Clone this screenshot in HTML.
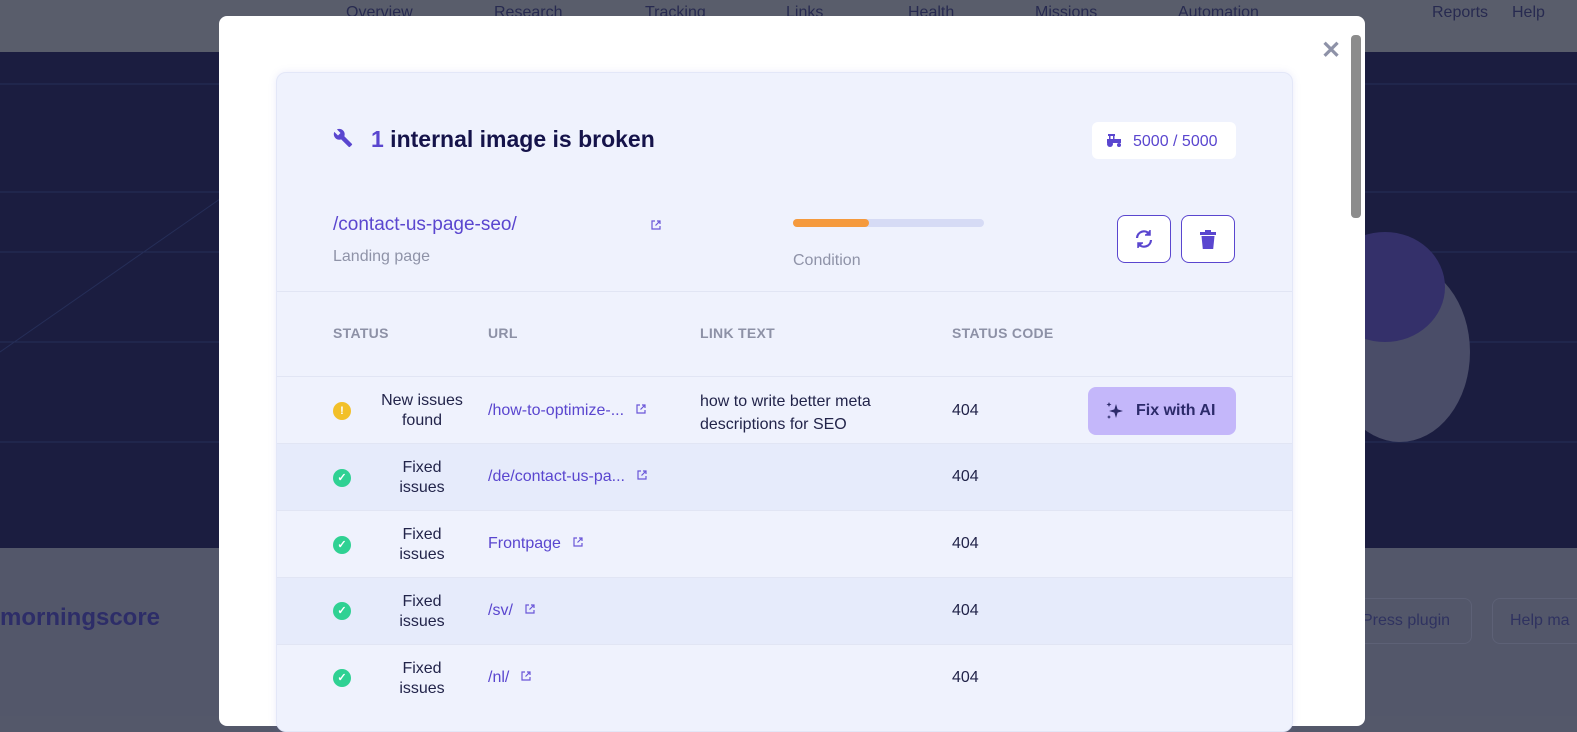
<!DOCTYPE html>
<html><head><meta charset="utf-8"><style>
*{margin:0;padding:0;box-sizing:border-box}
body{width:1577px;height:716px;overflow:hidden;position:relative;font-family:"Liberation Sans",sans-serif;background:#54586a}
.nav{position:absolute;left:0;top:0;width:1577px;height:52px;background:#595d6b}
.nav span{position:absolute;top:4px;font-size:16px;color:#272a50}
.hero{position:absolute;left:0;top:52px;width:1577px;height:496px;background:#1b1d40}
.foot{position:absolute;left:0;top:548px;width:1577px;height:168px;background:#53576a}
.modal{position:absolute;left:219px;top:16px;width:1146px;height:710px;background:#fff;border-radius:8px}
.close{position:absolute;left:1321px;top:36px;font-size:24px;color:#8e92a8;font-weight:bold}
.sb{position:absolute;left:1351px;top:35px;width:10px;height:183px;background:#8c8c8c;border-radius:4px}
.card{position:absolute;left:276px;top:72px;width:1017px;height:660px;background:#eff2fd;border:1px solid #e3e7f8;border-radius:10px;box-shadow:0 0 8px rgba(120,130,220,.15);overflow:hidden}
.t{position:absolute;white-space:nowrap}
.row{position:absolute;left:0;width:1017px;height:67px;border-top:1px solid #e1e5f4}
.st{position:absolute;left:90px;width:110px;text-align:center;font-size:16px;color:#22244a;line-height:20px}
.url{position:absolute;left:211px;font-size:16px;color:#5a46cf}
.ext{display:inline-block;width:10px;height:10px;margin-left:12px;vertical-align:1px}
.ok{position:absolute;left:56px;width:18px;height:18px;border-radius:50%;background:#2fd193;color:#fff;font-size:11px;text-align:center;line-height:18px;font-weight:bold}
.code{position:absolute;left:675px;font-size:16px;color:#22244a}
.hd{position:absolute;top:33px;font-size:14px;font-weight:bold;color:#8d91a6;letter-spacing:.3px}
</style></head><body>
<div class="nav">
<span style="left:346px">Overview</span><span style="left:494px">Research</span><span style="left:645px">Tracking</span><span style="left:786px">Links</span><span style="left:908px">Health</span><span style="left:1035px">Missions</span><span style="left:1178px">Automation</span><span style="left:1432px">Reports</span><span style="left:1512px">Help</span>
</div>
<div class="hero">
<svg width="1577" height="496" style="position:absolute;left:0;top:0"><g stroke="#262e58" fill="none"><line x1="0" y1="32" x2="1577" y2="32"/><line x1="0" y1="140" x2="1577" y2="140"/><line x1="0" y1="200" x2="1577" y2="200"/><line x1="0" y1="290" x2="1577" y2="290"/><line x1="0" y1="390" x2="1577" y2="390"/><line x1="0" y1="300" x2="230" y2="140"/></g>
<ellipse cx="1400" cy="300" rx="70" ry="90" fill="#4a4d68"/><ellipse cx="1385" cy="235" rx="60" ry="55" fill="#34306a"/></svg>
</div>
<div class="foot">
<div class="t" style="left:0;top:56px;font-size:24px;color:#2d2d68;font-weight:bold">morningscore</div>
<div style="position:absolute;left:1340px;top:50px;width:132px;height:46px;border:1px solid #5d6176;border-radius:8px"></div>
<div class="t" style="left:1362px;top:64px;font-size:16px;color:#2f3260">Press plugin</div>
<div style="position:absolute;left:1492px;top:50px;width:100px;height:46px;border:1px solid #5d6176;border-radius:8px"></div>
<div class="t" style="left:1510px;top:64px;font-size:16px;color:#2f3260">Help ma</div>
</div>
<div class="modal"></div>
<div class="close">✕</div>
<div class="sb"></div>
<div class="card">
<svg class="t" style="left:56px;top:55px" width="20" height="20" viewBox="0 0 24 24"><path d="M22.7 19l-9.1-9.1c.9-2.3.4-5-1.5-6.9-2-2-5-2.4-7.4-1.3L9 6 6 9 1.6 4.7C.4 7.1.9 10.1 2.9 12.1c1.9 1.9 4.6 2.4 6.9 1.5l9.1 9.1c.4.4 1 .4 1.4 0l2.3-2.3c.5-.4.5-1.1.1-1.4z" fill="#5a46cf"/></svg>
<div class="t" style="left:94px;top:53px;font-size:23px;font-weight:bold;color:#15134a"><span style="color:#5a46cf">1</span> internal image is broken</div>
<div style="position:absolute;left:815px;top:49px;width:144px;height:37px;background:#fff;border-radius:6px"></div>
<svg class="t" style="left:829px;top:61px" width="16" height="13" viewBox="0 0 16 13" fill="#5a46cf"><rect x="2" y="0" width="7" height="2"/><rect x="3" y="2" width="1.5" height="4"/><rect x="7" y="2" width="1.5" height="4"/><rect x="1" y="5" width="14" height="4"/><circle cx="4" cy="10" r="3"/><circle cx="13" cy="11" r="2"/></svg>
<div class="t" style="left:856px;top:60px;font-size:16px;color:#5a46cf">5000 / 5000</div>
<div class="t" style="left:56px;top:141px;font-size:19px;color:#5a46cf">/contact-us-page-seo/</div>
<svg class="t" style="left:374px;top:147px" width="10" height="10" viewBox="0 0 10 10" fill="none" stroke="#6a56d8" stroke-width="1.2"><path d="M4 1H1v8h8V6M6 1h3v3M9 1L4.5 5.5"/></svg>
<div class="t" style="left:56px;top:175px;font-size:16px;color:#8f93a8">Landing page</div>
<div style="position:absolute;left:516px;top:146px;width:191px;height:8px;background:#d6dbf5;border-radius:4px"><div style="width:76px;height:8px;background:#f59a3d;border-radius:4px"></div></div>
<div class="t" style="left:516px;top:179px;font-size:16px;color:#8f93a8">Condition</div>
<div style="position:absolute;left:840px;top:142px;width:54px;height:48px;border:1.5px solid #5a46cf;border-radius:8px;background:#fff"><svg style="position:absolute;left:16px;top:13px" width="20" height="20" viewBox="0 0 20 20" fill="none" stroke="#5a46cf" stroke-width="2.2"><path d="M3 9a7 7 0 0 1 12.5-4M17 11a7 7 0 0 1-12.5 4"/><path d="M16 1v5h-5M4 19v-5h5" fill="#5a46cf" stroke-width="1.5"/></svg></div>
<div style="position:absolute;left:904px;top:142px;width:54px;height:48px;border:1.5px solid #5a46cf;border-radius:8px;background:#fff"><svg style="position:absolute;left:18px;top:14px" width="16" height="19" viewBox="0 0 16 19"><rect x="0" y="2" width="16" height="3" fill="#5a46cf"/><rect x="5" y="0" width="6" height="3" fill="#5a46cf"/><path d="M1.5 6h13l-1.3 13H2.8z" fill="#5a46cf"/></svg></div>
<div class="row" style="top:218px;height:85px"><div class="hd" style="left:56px">STATUS</div><div class="hd" style="left:211px">URL</div><div class="hd" style="left:423px">LINK TEXT</div><div class="hd" style="left:675px">STATUS CODE</div></div>
<div class="row" style="top:303px;background:#eff2fd">
<div class="ok" style="top:25px;background:#f2c029">!</div>
<div class="st" style="top:14px">New issues<br>found</div>
<div class="url t" style="top:25px">/how-to-optimize-...<svg class="ext" viewBox="0 0 10 10" fill="none" stroke="#6a56d8" stroke-width="1.2"><path d="M4 1H1v8h8V6M6 1h3v3M9 1L4.5 5.5"/></svg></div>
<div class="t" style="left:423px;top:13px;font-size:16px;color:#22244a;line-height:23px">how to write better meta<br>descriptions for SEO</div>
<div class="code t" style="top:25px">404</div>
<div style="position:absolute;left:811px;top:10px;width:148px;height:48px;background:#c4b7fa;border-radius:8px"></div>
<svg class="t" style="left:828px;top:24px" width="20" height="20" viewBox="0 0 20 20" fill="#2c2a6a"><path d="M11 3l1.6 5.4L18 10l-5.4 1.6L11 17l-1.6-5.4L4 10l5.4-1.6z"/><path d="M4 1l.7 1.8L6.5 3.5l-1.8.7L4 6l-.7-1.8L1.5 3.5l1.8-.7zM4 14l.6 1.4 1.4.6-1.4.6L4 18l-.6-1.4L2 16l1.4-.6z"/></svg>
<div class="t" style="left:859px;top:25px;font-size:16px;font-weight:bold;color:#2c2a6a">Fix with AI</div>
</div>
<div class="row" style="top:370px;background:#e6ebfb"><div class="ok" style="top:25px">✓</div><div class="st" style="top:14px">Fixed<br>issues</div><div class="url t" style="top:24px">/de/contact-us-pa...<svg class="ext" viewBox="0 0 10 10" fill="none" stroke="#6a56d8" stroke-width="1.2"><path d="M4 1H1v8h8V6M6 1h3v3M9 1L4.5 5.5"/></svg></div><div class="code t" style="top:24px">404</div></div>
<div class="row" style="top:437px;background:#eff2fd"><div class="ok" style="top:25px">✓</div><div class="st" style="top:14px">Fixed<br>issues</div><div class="url t" style="top:24px">Frontpage<svg class="ext" viewBox="0 0 10 10" fill="none" stroke="#6a56d8" stroke-width="1.2"><path d="M4 1H1v8h8V6M6 1h3v3M9 1L4.5 5.5"/></svg></div><div class="code t" style="top:24px">404</div></div>
<div class="row" style="top:504px;background:#e6ebfb"><div class="ok" style="top:24px">✓</div><div class="st" style="top:14px">Fixed<br>issues</div><div class="url t" style="top:24px">/sv/<svg class="ext" viewBox="0 0 10 10" fill="none" stroke="#6a56d8" stroke-width="1.2"><path d="M4 1H1v8h8V6M6 1h3v3M9 1L4.5 5.5"/></svg></div><div class="code t" style="top:24px">404</div></div>
<div class="row" style="top:571px;background:#eff2fd"><div class="ok" style="top:24px">✓</div><div class="st" style="top:14px">Fixed<br>issues</div><div class="url t" style="top:24px">/nl/<svg class="ext" viewBox="0 0 10 10" fill="none" stroke="#6a56d8" stroke-width="1.2"><path d="M4 1H1v8h8V6M6 1h3v3M9 1L4.5 5.5"/></svg></div><div class="code t" style="top:24px">404</div></div>
</div>
</body></html>
